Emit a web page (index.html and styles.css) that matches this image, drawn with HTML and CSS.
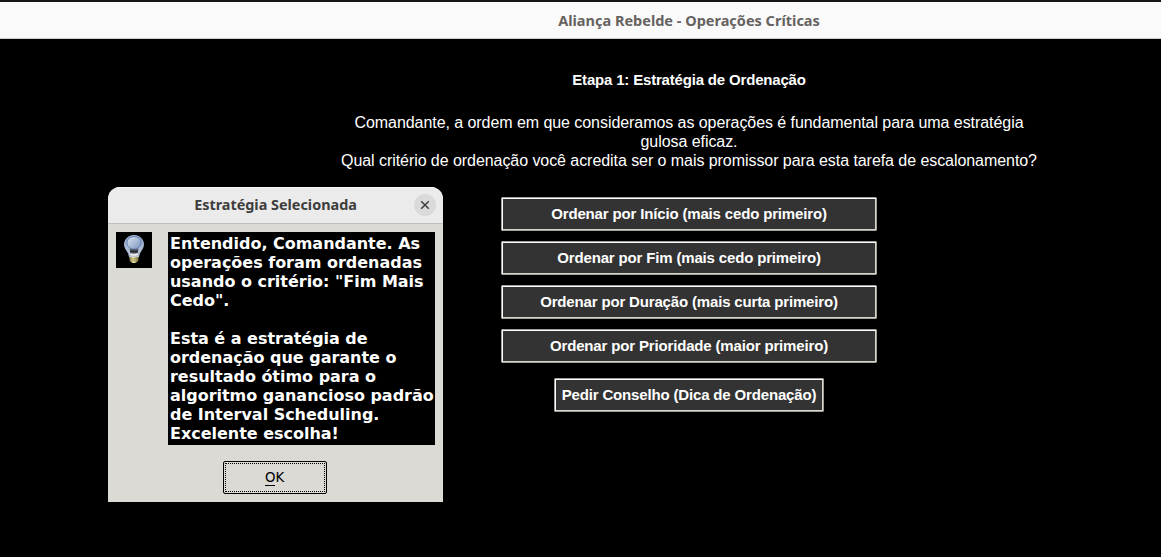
FILE: index.html
```html
<!DOCTYPE html>
<html lang="pt-BR">
<head>
<meta charset="utf-8">
<title>Aliança Rebelde - Operações Críticas</title>
<link rel="stylesheet" href="styles.css">
</head>
<body>
<div class="window">
  <header class="titlebar"><span class="window-title">Aliança Rebelde - Operações Críticas</span></header>
  <main class="content">
    <h1 class="stage">Etapa 1: Estratégia de Ordenação</h1>
    <p class="prompt">Comandante, a ordem em que consideramos as operações é fundamental para uma estratégia<br>gulosa eficaz.<br>Qual critério de ordenação você acredita ser o mais promissor para esta tarefa de escalonamento?</p>
    <div class="options">
      <button class="option">Ordenar por Início (mais cedo primeiro)</button>
      <button class="option">Ordenar por Fim (mais cedo primeiro)</button>
      <button class="option">Ordenar por Duração (mais curta primeiro)</button>
      <button class="option">Ordenar por Prioridade (maior primeiro)</button>
    </div>
    <button class="option advice">Pedir Conselho (Dica de Ordenação)</button>
  </main>
</div>
<section class="dialog">
  <header class="dialog-header">
    <span class="dialog-title">Estratégia Selecionada</span>
    <span class="close"><svg width="22" height="22" viewBox="0 0 22 22"><path d="M7.2 7.2l7.6 7.6M14.8 7.2l-7.6 7.6" stroke="#3d3d3d" stroke-width="1.5" fill="none"/></svg></span>
  </header>
  <div class="dialog-body">
    <svg class="bulb" width="36" height="36" viewBox="0 0 36 36">
      <defs>
        <linearGradient id="glass" x1="0" y1="0" x2="0" y2="1"><stop offset="0" stop-color="#7893c4"/><stop offset=".55" stop-color="#a6b9d6"/><stop offset="1" stop-color="#c8cbd2"/></linearGradient>
        <linearGradient id="shine" x1="0" y1="0" x2="1" y2="1"><stop offset="0" stop-color="#dce5f2"/><stop offset="1" stop-color="#7a94bd"/></linearGradient>
        <linearGradient id="base" x1="0" y1="0" x2="1" y2="0"><stop offset="0" stop-color="#8d8544"/><stop offset=".4" stop-color="#f4efb0"/><stop offset="1" stop-color="#81783a"/></linearGradient>
      </defs>
      <rect width="36" height="36" fill="#000"/>
      <path d="M18 3.500C12.300 3.500 8.500 7.500 8.500 12.500C8.500 17.500 13 19.500 13.500 25H22.500C23 19.500 27.500 17.500 27.500 12.500C27.500 7.500 23.700 3.500 18 3.500Z" fill="url(#glass)" stroke="#b4c4e0" stroke-width=".9"/>
      <path d="M13.500 16.500H22.500L21.500 21.500H14.500Z" fill="#50565f"/>
      <path d="M14 19.500h8" fill="none" stroke="#25292f" stroke-width="1.400"/>
      <ellipse cx="18" cy="10.800" rx="7" ry="6.300" fill="url(#shine)" stroke="#5876a8" stroke-width=".7"/>
      <path d="M14.500 21.800c2 1.400 5 1.400 7 0" fill="none" stroke="#eef0f2" stroke-width="1.600"/>
      <path d="M13.300 25h9.400l-.5 4-2.700 2h-3l-2.700-2Z" fill="url(#base)"/>
      <path d="M14 27l8-.5M14.300 29l7.400-.5" stroke="#7a733b" stroke-width=".6"/>
    </svg>
    <p class="message">Entendido, Comandante. As<br>operações foram ordenadas<br>usando o critério: "Fim Mais<br>Cedo".<br><br>Esta é a estratégia de<br>ordenação que garante o<br>resultado ótimo para o<br>algoritmo ganancioso padrão<br>de Interval Scheduling.<br>Excelente escolha!</p>
  </div>
  <footer class="dialog-footer"><button class="ok"><span class="ok-face"><span><span class="mnemonic">O</span>K</span></span></button></footer>
</section>
</body>
</html>
```
FILE: styles.css
```css
* { box-sizing: border-box; }
body { margin: 0; height: 557px; overflow: hidden; background: #000; }
.window { height: 557px; border-top: 2px solid #151515; color: #fff; font-family: "Liberation Sans", Arial, sans-serif; }
.titlebar { height: 37px; padding-left: 217px; display: flex; align-items: center; justify-content: center; background: #fafafa; border-bottom: 1px solid #cfcfcf; }
.window-title { color: #66625f; font: bold 14.5px/20px "Noto Sans", sans-serif; white-space: nowrap; }
.content { display: flex; flex-direction: column; align-items: center; padding: 32px 0 0 217px; }
.stage { margin: 0; font-size: 15px; line-height: 18px; font-weight: bold; letter-spacing: -.18px; }
.prompt { margin: 24px 0 27px; text-align: center; font-size: 16px; line-height: 19px; letter-spacing: -.06px; white-space: nowrap; }
.options { display: flex; flex-direction: column; gap: 10px; width: 376px; }
.option { height: 34px; padding: 0; border: 1px solid #a39f96; border-radius: 1px; background: #333; color: #fff; font: bold 15px/18px "Liberation Sans", Arial, sans-serif; letter-spacing: -.16px; white-space: nowrap; box-shadow: inset 1px 1px #fff, inset -1px -1px #d9d6d0; }
.advice { width: 270px; margin-top: 15px; }
.dialog { position: absolute; left: 108px; top: 187px; width: 335px; height: 315px; background: #dcdad5; border-radius: 12px 12px 0 0; overflow: hidden; }
.dialog-header { position: relative; height: 37px; display: flex; align-items: center; justify-content: center; background: #ebebeb; border-bottom: 1px solid #bfbfbb; box-shadow: inset 0 1px #f7f7f7; }
.dialog-title { color: #3d3d3d; font: bold 14.4px/20px "Noto Sans", sans-serif; white-space: nowrap; }
.close { position: absolute; right: 7px; top: 7px; width: 22px; height: 22px; border-radius: 50%; background: #dadada; }
.close svg { display: block; }
.dialog-body { display: flex; gap: 16px; padding: 8px 8px 0; }
.bulb { flex: none; }
.message { margin: 0; width: 267px; height: 213px; padding: 2px; background: #000; color: #fff; font: bold 16px/19px "DejaVu Sans", sans-serif; letter-spacing: -.02px; white-space: nowrap; }
.dialog-footer { display: flex; justify-content: center; padding: 16px 1px 0 0; }
.ok { width: 104px; height: 33px; margin-right: 1px; padding: 1px; border: 1px solid #000; border-radius: 2px; background: #dcdad5; color: #000; font: 13.330px/16px "DejaVu Sans", sans-serif; }
.ok-face { display: flex; align-items: center; justify-content: center; height: 100%; border: 1px dotted #000; }
.mnemonic { border-bottom: 1px solid #000; }
```
